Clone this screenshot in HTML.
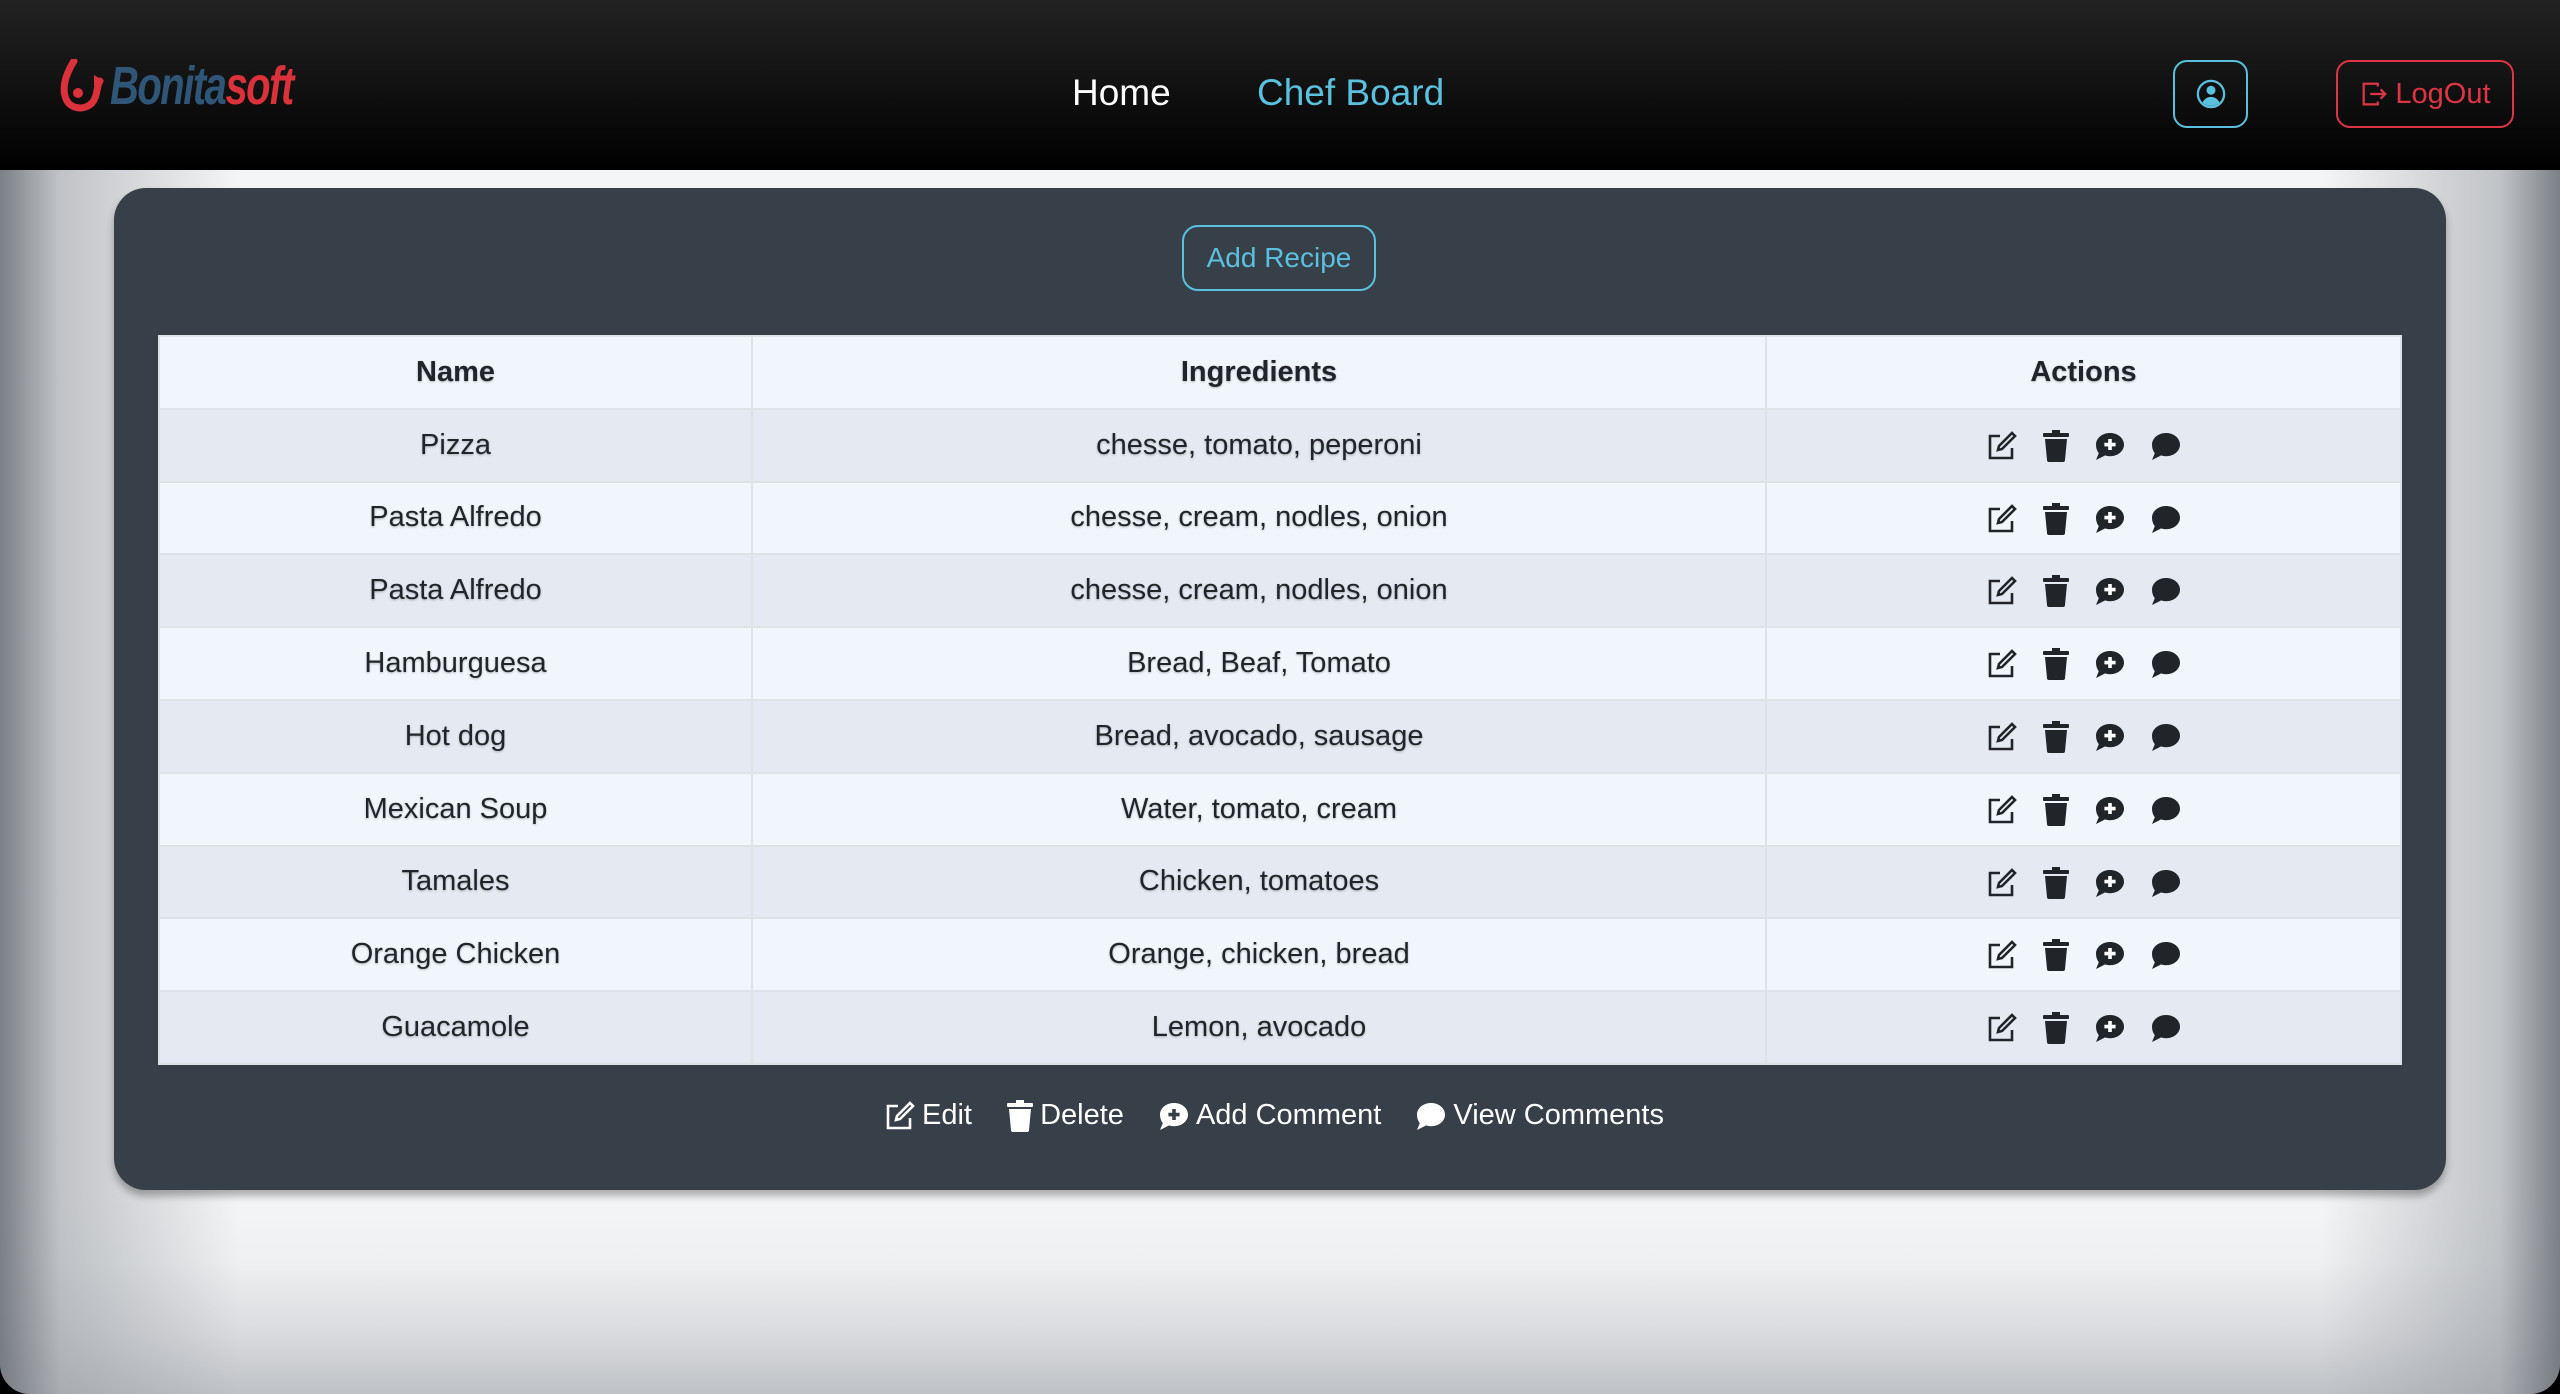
<!DOCTYPE html>
<html><head><meta charset="utf-8"><style>
*{box-sizing:border-box;margin:0;padding:0}
html,body{width:2560px;height:1394px;overflow:hidden;background:#000}
body{font-family:"Liberation Sans",sans-serif;position:relative}
.bg{position:absolute;left:0;top:170px;width:2560px;height:1224px;border-radius:0 0 30px 30px;
background:
linear-gradient(90deg,rgba(110,115,122,.9) 0px,rgba(150,154,160,.55) 60px,rgba(220,222,225,0) 240px,rgba(220,222,225,0) 2320px,rgba(150,154,160,.55) 2500px,rgba(110,115,122,.9) 2560px),
linear-gradient(#f4f5f6 0%,#f4f5f6 88%,#e4e6e8 95%,#c4c7cb 100%) }
.bg2{position:absolute;left:0;top:1190px;width:2560px;height:204px;border-radius:0 0 30px 30px;
background:
linear-gradient(90deg,rgba(110,115,122,.9) 0px,rgba(150,154,160,.55) 60px,rgba(220,222,225,0) 240px,rgba(220,222,225,0) 2320px,rgba(150,154,160,.55) 2500px,rgba(110,115,122,.9) 2560px),
linear-gradient(#f5f6f7 0%,#eef0f1 35%,#d9dbde 70%,#bfc2c6 100%)}
.hdr{position:absolute;left:0;top:0;width:2560px;height:170px;background:linear-gradient(#222 0%,#151515 40%,#000 100%)}
.logo{position:absolute;left:60px;top:58px;height:56px;display:flex;align-items:center}
.logotxt{font-size:54px;font-weight:bold;font-style:italic;letter-spacing:-2px;transform:scaleX(.74);transform-origin:left center;margin-left:6px}
.nav{position:absolute;top:68px;font-size:37px;line-height:50px}
.btn{position:absolute;border:2px solid;border-radius:14px;display:flex;align-items:center;justify-content:center}
.card{position:absolute;left:114px;top:188px;width:2332px;height:1002px;background:#373f49;border-radius:32px;box-shadow:0 6px 8px rgba(0,0,0,.3)}
table{position:absolute;left:44px;top:147px;width:2244px;border-collapse:collapse;font-size:29px;color:#212529}
td,th{height:72.8px;text-align:center;border:2px solid #dfe3e8;text-shadow:0 1px 2px rgba(0,0,0,.25)}
th{background:#f0f6fc;font-weight:bold}
tr:nth-child(even) td{background:#e5e9f1}
tr:nth-child(odd) td{background:#f0f6fc}
.ic{display:inline-block;vertical-align:middle;margin:0 12px}
.legend{position:absolute;left:-6px;width:100%;top:911px;text-align:center;color:#fff;font-size:29px}
.legend span{margin:0 13px;display:inline-flex;align-items:center;gap:6px}
</style></head><body>
<div class="hdr">
 <div class="logo">
  <svg width="44" height="54" viewBox="0 0 44 54"><path d="M14 2 C4 18 2 30 6 40 C10 50 24 52 32 44 C38 37 36 28 40 22" fill="none" stroke="#d9323b" stroke-width="7" stroke-linecap="round"/><circle cx="18" cy="34" r="5" fill="#d9323b"/><path d="M34 16 l10 6 l-10 5z" fill="#d9323b"/></svg>
  <div class="logotxt"><span style="color:#2f5577">Bonita</span><span style="color:#d9323b">soft</span></div>
 </div>
 <div class="nav" style="left:1072px;color:#fff">Home</div>
 <div class="nav" style="left:1257px;color:#5bc0de">Chef Board</div>
 <div class="btn" style="left:2173px;top:60px;width:75px;height:68px;border-color:#5bc0de">
  <svg width="30" height="30" viewBox="0 0 16 16"><circle cx="8" cy="8" r="7" fill="none" stroke="#5bc0de" stroke-width="1.2"/><circle cx="8" cy="6" r="2.4" fill="#5bc0de"/><path d="M3.5 12.5c1-2 2.6-3 4.5-3s3.5 1 4.5 3c-1.2 1.2-2.7 1.8-4.5 1.8s-3.3-.6-4.5-1.8z" fill="#5bc0de"/></svg>
 </div>
 <div class="btn" style="left:2336px;top:60px;width:178px;height:68px;border-color:#dc3545;color:#dc3545;font-size:29px;gap:6px">
  <svg width="30" height="30" viewBox="0 0 16 16" fill="none" stroke="#dc3545" stroke-width="1.2"><path d="M10 4V2.5H2.5v11H10V12"/><path d="M6 8h8M11.5 5.5 14 8l-2.5 2.5"/></svg>LogOut
 </div>
</div>
<div class="bg"></div>
<div class="bg2"></div>
<div class="card">
 <div class="btn" style="left:1068px;top:37px;width:194px;height:66px;border-color:#5bc0de;color:#5bc0de;font-size:28px;border-radius:16px">Add Recipe</div>
 <table>
  <tr><th style="width:593px">Name</th><th style="width:1014px">Ingredients</th><th>Actions</th></tr>
  <tr><td>Pizza</td><td>chesse, tomato, peperoni</td><td>ICONS</td></tr>
  <tr><td>Pasta Alfredo</td><td>chesse, cream, nodles, onion</td><td>ICONS</td></tr>
  <tr><td>Pasta Alfredo</td><td>chesse, cream, nodles, onion</td><td>ICONS</td></tr>
  <tr><td>Hamburguesa</td><td>Bread, Beaf, Tomato</td><td>ICONS</td></tr>
  <tr><td>Hot dog</td><td>Bread, avocado, sausage</td><td>ICONS</td></tr>
  <tr><td>Mexican Soup</td><td>Water, tomato, cream</td><td>ICONS</td></tr>
  <tr><td>Tamales</td><td>Chicken, tomatoes</td><td>ICONS</td></tr>
  <tr><td>Orange Chicken</td><td>Orange, chicken, bread</td><td>ICONS</td></tr>
  <tr><td>Guacamole</td><td>Lemon, avocado</td><td>ICONS</td></tr>
 </table>
 <div class="legend">
  <span><svg width="32" height="32" viewBox="0 0 16 16" fill="none" stroke="#fff" stroke-width="1.3"><path d="M7 3H2v11h11V9"/><path d="M13 1.5l1.5 1.5L8 9.5 6 10l.5-2z"/></svg>Edit</span>
  <span><svg width="28" height="32" viewBox="0 0 14 16" fill="#fff"><rect x="0.5" y="1.5" width="13" height="2" rx=".5"/><rect x="5" y="0" width="4" height="2"/><path d="M1.5 4.5h11l-1 10.5a1 1 0 0 1-1 1h-7a1 1 0 0 1-1-1z"/></svg>Delete</span>
  <span><svg width="32" height="32" viewBox="0 0 16 16"><path d="M8 1.5c3.9 0 7 2.6 7 5.8s-3.1 5.8-7 5.8c-.9 0-1.700-.1-2.4-.4L1 15l1.4-3.4C1.5 10.5 1 9 1 7.3 1 4.1 4.1 1.5 8 1.5z" fill="#fff"/><path d="M8 4.5v5.5M5.2 7.3h5.6" stroke="#373f49" stroke-width="1.8"/></svg>Add Comment</span>
  <span><svg width="32" height="32" viewBox="0 0 16 16"><path d="M8 1.5c3.9 0 7 2.6 7 5.8s-3.1 5.8-7 5.8c-.9 0-1.7-.1-2.4-.4L1 15l1.4-3.4C1.5 10.5 1 9 1 7.3 1 4.1 4.1 1.5 8 1.5z" fill="#fff"/></svg>View Comments</span>
 </div>
</div>
<script>
var ic='<svg class="ic" width="32" height="32" viewBox="0 0 16 16" fill="none" stroke="#212529" stroke-width="1.3"><path d="M7 3H2v11h11V9"/><path d="M13 1.5l1.5 1.5L8 9.5 6 10l.5-2z"/></svg>'+
'<svg class="ic" width="28" height="32" viewBox="0 0 14 16" fill="#212529"><rect x="0.5" y="1.5" width="13" height="2" rx=".5"/><rect x="5" y="0" width="4" height="2"/><path d="M1.5 4.5h11l-1 10.5a1 1 0 0 1-1 1h-7a1 1 0 0 1-1-1z"/></svg>'+
'<svg class="ic" width="32" height="32" viewBox="0 0 16 16"><path d="M8 1.5c3.9 0 7 2.6 7 5.8s-3.1 5.8-7 5.8c-.9 0-1.7-.1-2.4-.4L1 15l1.4-3.4C1.5 10.5 1 9 1 7.3 1 4.1 4.1 1.5 8 1.5z" fill="#212529"/><path d="M8 4.5v5.5M5.2 7.3h5.6" stroke="#fff" stroke-width="1.8"/></svg>'+
'<svg class="ic" width="32" height="32" viewBox="0 0 16 16"><path d="M8 1.5c3.9 0 7 2.6 7 5.8s-3.1 5.8-7 5.8c-.9 0-1.7-.1-2.4-.4L1 15l1.4-3.4C1.5 10.5 1 9 1 7.3 1 4.1 4.1 1.5 8 1.5z" fill="#212529"/></svg>';
document.querySelectorAll('td').forEach(function(t){if(t.textContent=='ICONS')t.innerHTML=ic;});
</script>
</body></html>
